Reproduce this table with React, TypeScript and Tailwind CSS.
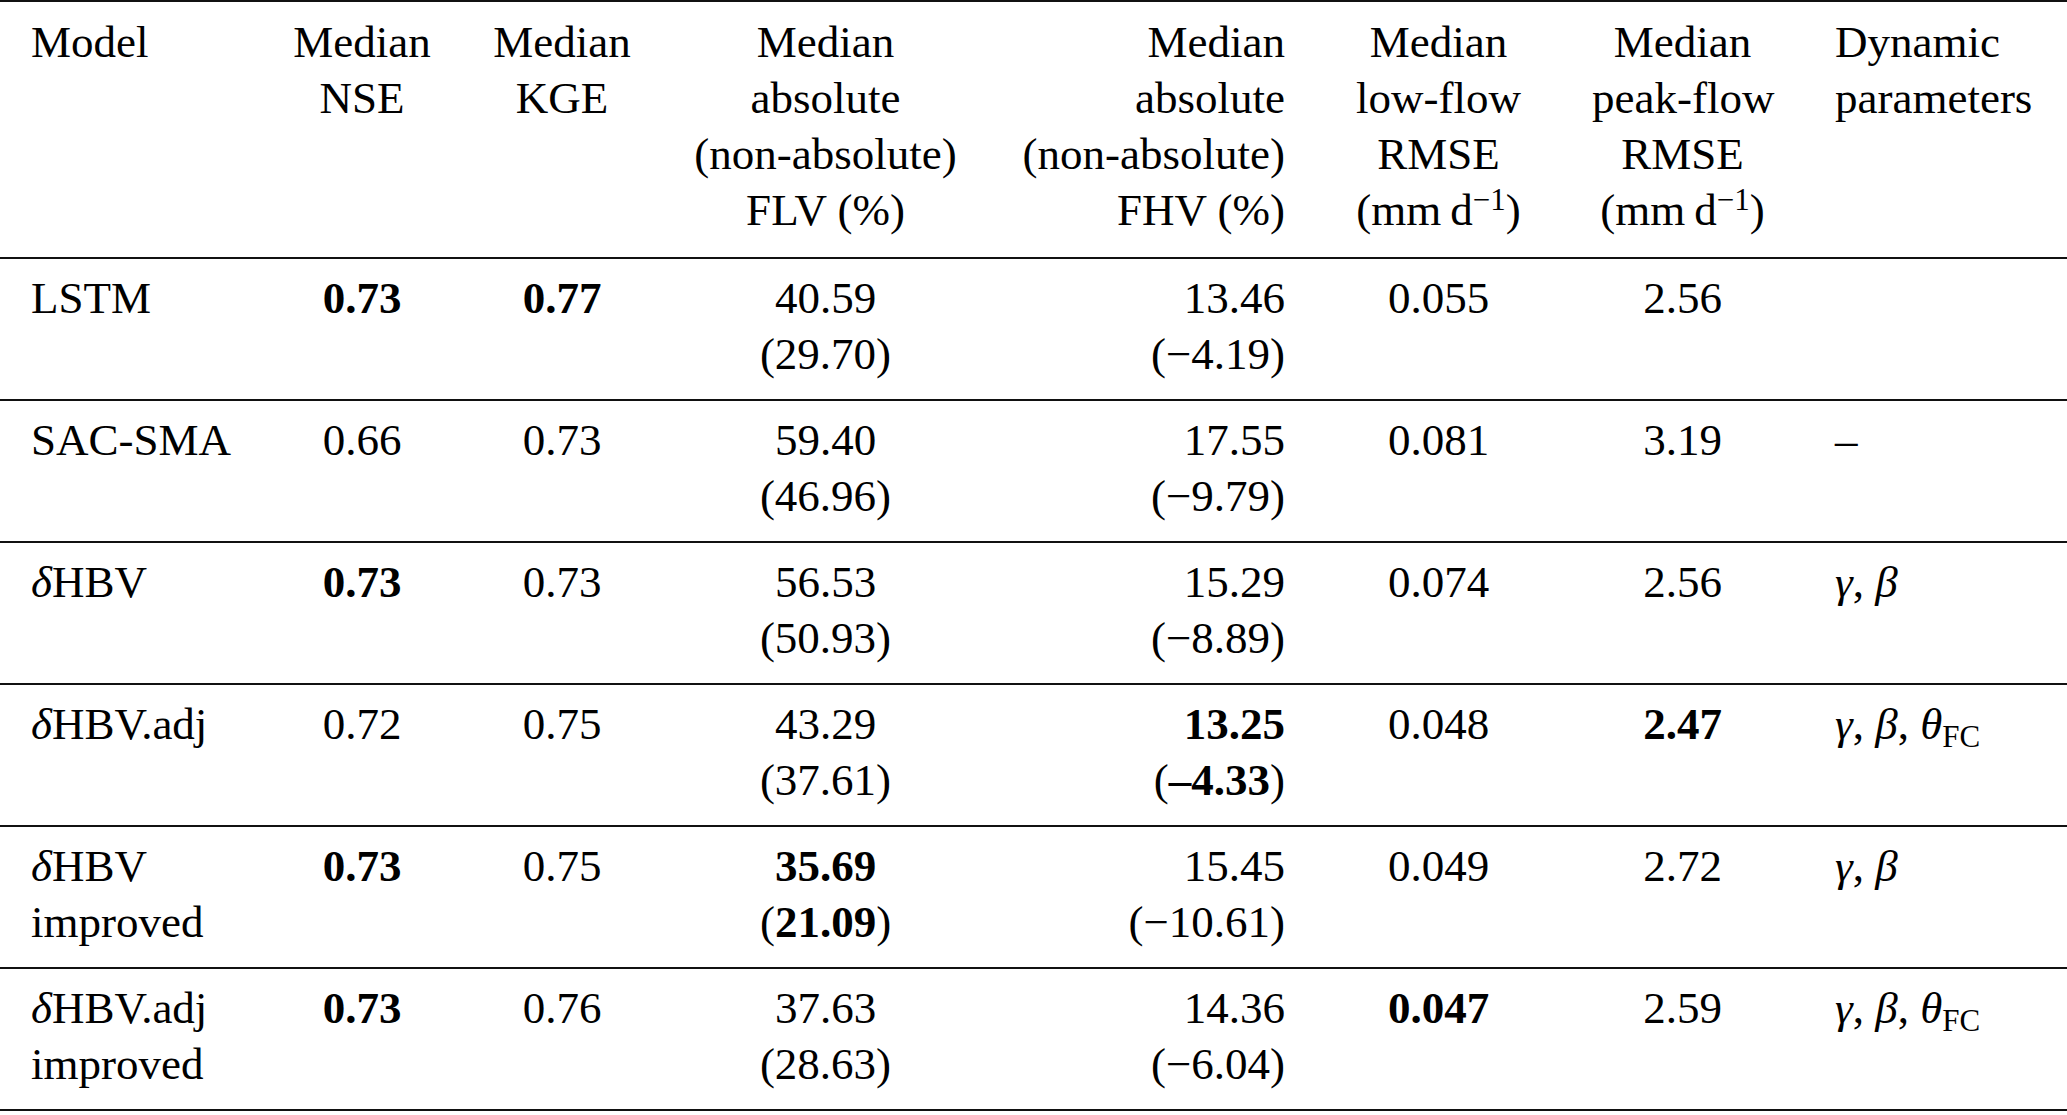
import type { ReactNode } from 'react';

type Align = 'left' | 'center' | 'right';

const colWidths = [262, 200, 200, 327, 327, 245, 243, 263];
const aligns: Align[] = ['left', 'center', 'center', 'center', 'right', 'center', 'center', 'left'];

const alignClass: Record<Align, string> = {
  left: 'text-left',
  center: 'text-center',
  right: 'text-right',
};

const unit = (
  <>
    (mm{'\u2009'}d<sup className="text-[31px]">−1</sup>)
  </>
);

const headers: ReactNode[] = [
  <>Model</>,
  <>Median<br />NSE</>,
  <>Median<br />KGE</>,
  <>Median<br />absolute<br />(non-absolute)<br />FLV (%)</>,
  <>Median<br />absolute<br />(non-absolute)<br />FHV (%)</>,
  <>Median<br />low-flow<br />RMSE<br />{unit}</>,
  <>Median<br />peak-flow<br />RMSE<br />{unit}</>,
  <>Dynamic<br />parameters</>,
];

const B = ({ children }: { children: ReactNode }) => <span className="font-bold">{children}</span>;
const dHBV = <><i>δ</i>HBV</>;
const gb = <><i>γ</i>, <i>β</i></>;
const gbt = <><i>γ</i>, <i>β</i>, <i>θ</i><sub className="text-[31px]">FC</sub></>;

const rows: ReactNode[][] = [
  [<>LSTM</>, <B>0.73</B>, <B>0.77</B>, <>40.59<br />(29.70)</>, <>13.46<br />(−4.19)</>, <>0.055</>, <>2.56</>, null],
  [<>SAC-SMA</>, <>0.66</>, <>0.73</>, <>59.40<br />(46.96)</>, <>17.55<br />(−9.79)</>, <>0.081</>, <>3.19</>, <>–</>],
  [dHBV, <B>0.73</B>, <>0.73</>, <>56.53<br />(50.93)</>, <>15.29<br />(−8.89)</>, <>0.074</>, <>2.56</>, gb],
  [<>{dHBV}.adj</>, <>0.72</>, <>0.75</>, <>43.29<br />(37.61)</>, <><B>13.25</B><br />(<B>–4.33</B>)</>, <>0.048</>, <B>2.47</B>, gbt],
  [<>{dHBV}<br />improved</>, <B>0.73</B>, <>0.75</>, <><B>35.69</B><br />(<B>21.09</B>)</>, <>15.45<br />(−10.61)</>, <>0.049</>, <>2.72</>, gb],
  [<>{dHBV}.adj<br />improved</>, <B>0.73</B>, <>0.76</>, <>37.63<br />(28.63)</>, <>14.36<br />(−6.04)</>, <B>0.047</B>, <>2.59</>, gbt],
];

export default function App() {
  return (
    <div className="w-[2067px] h-[1115px] bg-white text-black font-['Liberation_Serif','Times_New_Roman',serif] text-[45px] leading-[56px]">
      <table className="w-[2067px] table-fixed border-collapse border-t-2 border-[#111]">
        <colgroup>
          {colWidths.map((w, i) => (
            <col key={i} style={{ width: w }} />
          ))}
        </colgroup>
        <thead>
          <tr className="border-b-2 border-[#111]">
            {headers.map((h, i) => (
              <th
                key={i}
                className={`font-normal align-top px-[31px] pt-[12px] pb-[19px] whitespace-nowrap ${alignClass[aligns[i]]}`}
              >
                {h}
              </th>
            ))}
          </tr>
        </thead>
        <tbody>
          {rows.map((r, ri) => (
            <tr key={ri} className="border-b-2 border-[#111]">
              {r.map((c, ci) => (
                <td
                  key={ci}
                  className={`align-top px-[31px] pt-[11px] pb-[17px] h-[142px] whitespace-nowrap ${alignClass[aligns[ci]]}`}
                >
                  {c}
                </td>
              ))}
            </tr>
          ))}
        </tbody>
      </table>
    </div>
  );
}
